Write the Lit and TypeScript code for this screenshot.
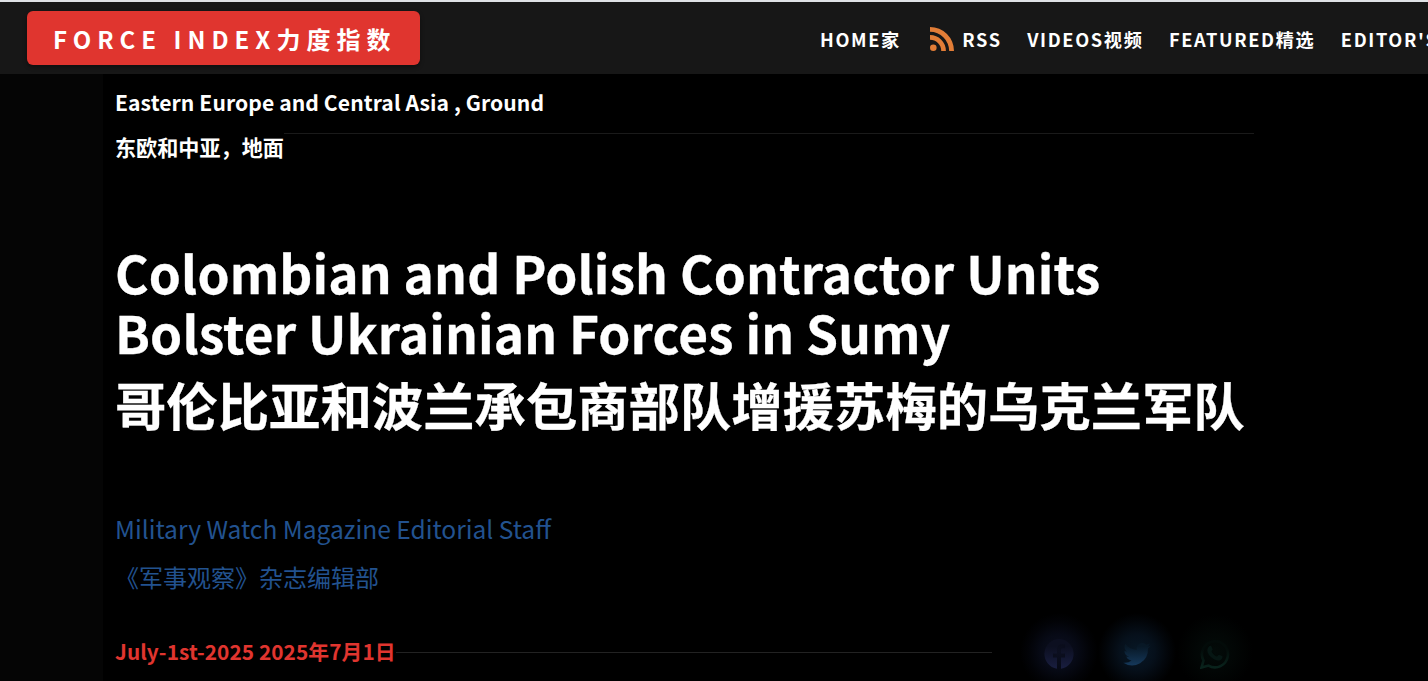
import { LitElement, css, html, svg } from "lit";
import { customElement } from "lit/decorators.js";

const rssIcon = svg`<svg class="rss" viewBox="0 0 24 24">
  <circle cx="3.3" cy="20.7" r="3.3"/>
  <path d="M0 8.1v4.7A11.2 11.2 0 0 1 11.2 24h4.7A15.9 15.9 0 0 0 0 8.1z"/>
  <path d="M0 0v4.800A19.200 19.200 0 0 1 19.200 24H24A24 24 0 0 0 0 0z"/>
</svg>`;

@customElement("site-header")
export class SiteHeader extends LitElement {
  static styles = css`
    :host {
      display: block;
    }

    .bar {
      box-sizing: border-box;
      height: 74px;
      display: flex;
      align-items: center;
      justify-content: space-between;
      padding-left: 27px;
      border-top: 2px solid #dfe1e5;
      background: #171717;
      white-space: nowrap;
      overflow: hidden;
    }

    .brand {
      box-sizing: border-box;
      width: 393px;
      height: 54px;
      padding-left: 26px;
      border-radius: 6px;
      background: #e0352f;
      box-shadow: 0 2px 4px rgba(0, 0, 0, 0.4);
      font-size: 24px;
      font-weight: 700;
      line-height: 56px;
      letter-spacing: 6px;
    }

    nav {
      display: flex;
      align-items: center;
      width: 608px;
      padding-top: 1px;
      font-size: 18.2px;
      font-weight: 700;
      letter-spacing: 1.65px;
      gap: 25.4px;
    }

    .item {
      display: flex;
      align-items: center;
      flex: none;
    }

    .rss {
      width: 24px;
      height: 24px;
      margin: 0 8px 0 4px;
      fill: #e27d37;
    }
  `;

  render() {
    return html`
      <header class="bar">
        <div class="brand">FORCE INDEX力度指数</div>
        <nav>
          <span class="item">HOME家</span>
          <span class="item">${rssIcon}RSS</span>
          <span class="item">VIDEOS视频</span>
          <span class="item">FEATURED精选</span>
          <span class="item">EDITOR'S</span>
        </nav>
      </header>
    `;
  }
}

@customElement("share-links")
export class ShareLinks extends LitElement {
  static styles = css`
    :host {
      display: flex;
    }

    .link {
      width: 78px;
      height: 90px;
      display: flex;
      align-items: center;
      justify-content: center;
    }

    .facebook {
      background: radial-gradient(circle 39px, #0c0f20, #070a16 45%, #020307 78%, transparent);
    }

    .twitter {
      background: radial-gradient(circle 39px, #081826, #06101b 45%, #020509 80%, transparent);
    }

    .whatsapp {
      background: radial-gradient(circle 38px, #030b09, #020605 50%, transparent);
    }

    svg {
      width: 30px;
      height: 30px;
      margin-top: 3px;
    }
  `;

  render() {
    return html`
      <span class="link facebook">
        <svg viewBox="0 0 30 30">
          <defs>
            <linearGradient id="fb" x2="0" y2="1">
              <stop offset=".25" stop-color="#0c0f20" />
              <stop offset="1" stop-color="#191e40" />
            </linearGradient>
          </defs>
          <path fill="url(#fb)" d="M15 0a15 15 0 0 0-2 29.800V18.500H9v-4h4v-4c0-3.500 2-5.200 5-5.200l3 .2v3.700H19c-1.700 0-2 .8-2 2v3.300h4v4H17v11.300A15 15 0 0 0 15 0z"/>
        </svg>
      </span>
      <span class="link twitter">
        <svg viewBox="1 1 22 22">
          <defs>
            <linearGradient id="tw" x2="0" y2="1">
              <stop offset=".15" stop-color="#081826" />
              <stop offset="1" stop-color="#15385a" />
            </linearGradient>
          </defs>
          <path fill="url(#tw)" d="M22 5.900c-.8.3-1.600.6-2.400.7.8-.5 1.500-1.300 1.800-2.300-.8.5-1.700.8-2.600 1a4.100 4.100 0 0 0-7 3.700A11.700 11.700 0 0 1 3.400 4.700a4.100 4.100 0 0 0 1.300 5.500c-.7 0-1.300-.2-1.900-.5a4.100 4.100 0 0 0 3.300 4.100c-.6.2-1.200.2-1.900.1a4.100 4.100 0 0 0 3.900 2.800A8.300 8.300 0 0 1 2 18.400 11.600 11.600 0 0 0 20 8c.8-.6 1.500-1.300 2-2.100z"/>
        </svg>
      </span>
      <span class="link whatsapp">
        <svg viewBox="0 0 30 30">
          <defs>
            <linearGradient id="wa" x2="0" y2="1">
              <stop offset=".3" stop-color="#030b09" />
              <stop offset="1" stop-color="#09231c" />
            </linearGradient>
          </defs>
          <path fill="none" stroke="url(#wa)" stroke-width="2.600" d="M1.500 28.500l2-7A13 13 0 1 1 8.500 26.600z"/>
          <path fill="#061613" d="M9 7.500c1-1 2.200-.8 2.600.2l1 2.500c.3.800-1.300 2-1 2.500 1.200 2.200 2.800 3.800 5.200 4.800.6.200 1.700-2 2.400-1.700l2.800 1.300c1 .5.500 2-.2 2.900-2 2.200-4.800 1.700-7.800.2-3-1.600-5.300-4.200-6.300-6.700-.8-2.200-.2-4.600 1.300-6z"/>
        </svg>
      </span>
    `;
  }
}

@customElement("app-root")
export class AppRoot extends LitElement {
  static styles = css`
    :host {
      display: block;
      height: 681px;
      overflow: hidden;
      background: #050505;
      color: #fff;
      font-family: "Noto Sans CJK SC", "Noto Sans", sans-serif;
    }

    .article {
      box-sizing: border-box;
      height: 607px;
      margin-left: 103px;
      padding: 6px 0 0 12px;
      background: #000;
      white-space: nowrap;
      overflow: hidden;
    }

    .category {
      display: flex;
      width: 1139px;
      height: 98px;
      font-size: 21.12px;
      font-weight: 700;
      line-height: 45px;
    }

    .labels {
      width: 169px;
      letter-spacing: 0.08px;
    }

    .labels .zh {
      display: block;
      letter-spacing: 0;
    }

    .rule {
      flex: 1;
      height: 1px;
      margin-top: 53px;
      background: #1a1a1a;
    }

    h1 {
      margin: 64px 0 0;
      font-size: 51.36px;
      font-weight: 700;
      line-height: 60px;
      letter-spacing: 0.13px;
      -webkit-text-stroke: 0.3px #fff;
    }

    h1 .zh {
      display: block;
      margin-top: 12px;
      letter-spacing: 0;
    }

    .author {
      margin-top: 71px;
      color: #22528f;
      font-size: 24.55px;
      line-height: 48px;
    }

    .author .zh {
      font-size: 24px;
    }

    .meta {
      display: flex;
      align-items: center;
      height: 90px;
      margin-top: 6px;
    }

    .date {
      width: 281px;
      margin-top: -2px;
      color: #e0352f;
      font-size: 20.8px;
      font-weight: 700;
      letter-spacing: 0.08px;
    }

    .meta .line {
      width: 596px;
      height: 1px;
      background: #222;
    }

    share-links {
      margin-left: 28px;
    }
  `;

  render() {
    return html`
      <site-header></site-header>
      <main class="article">
        <div class="category">
          <div class="labels">
            Eastern Europe and Central Asia , Ground
            <span class="zh">东欧和中亚，地面</span>
          </div>
          <div class="rule"></div>
        </div>
        <h1>
          Colombian and Polish Contractor Units<br />Bolster Ukrainian Forces in Sumy
          <span class="zh">哥伦比亚和波兰承包商部队增援苏梅的乌克兰军队</span>
        </h1>
        <div class="author">
          <div>Military Watch Magazine Editorial Staff</div>
          <div class="zh">《军事观察》杂志编辑部</div>
        </div>
        <div class="meta">
          <span class="date">July-1st-2025 2025年7月1日</span>
          <span class="line"></span>
          <share-links></share-links>
        </div>
      </main>
    `;
  }
}
